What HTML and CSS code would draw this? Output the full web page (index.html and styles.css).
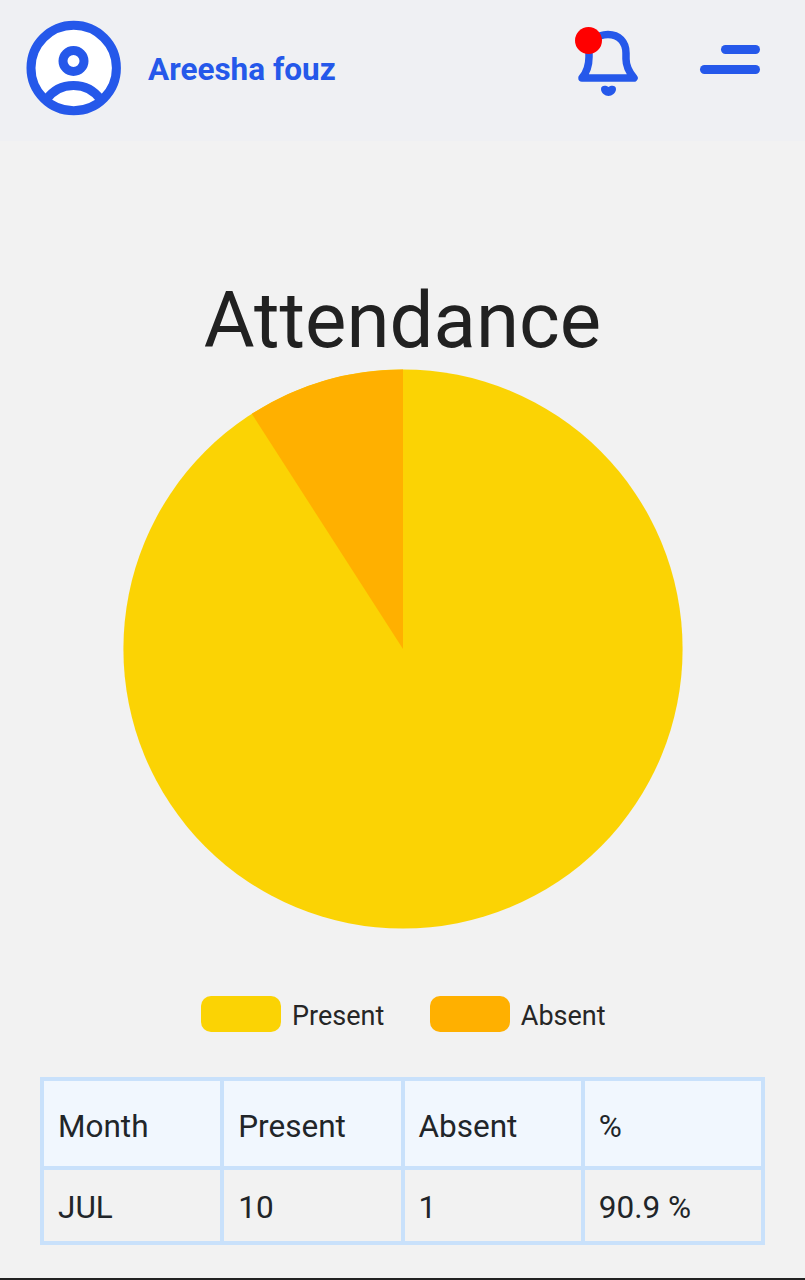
FILE: index.html
```html
<!DOCTYPE html>
<html lang="en">
<head>
    <meta charset="UTF-8">
    <meta name="viewport" content="width=device-width, initial-scale=1.0">
    <title>Attendance</title>
    <link rel="stylesheet" href="styles.css">
</head>
<body>
    <header class="topbar">
        <div class="profile">
            <svg class="avatar" width="96" height="96" viewBox="0 0 96 96">
                <circle cx="47.7" cy="48" r="42.7" fill="#fff" stroke="#2558ea" stroke-width="9"/>
                <circle cx="47.5" cy="41" r="10.5" fill="none" stroke="#2558ea" stroke-width="9"/>
                <path d="M20 80 C27 70 37 65.5 47.5 65.5 C58 65.5 68 70 75 80" fill="none" stroke="#2558ea" stroke-width="9"/>
            </svg>
            <span class="profile-name">Areesha fouz</span>
        </div>
        <div class="actions">
            <div class="bell">
                <svg width="66" height="72" viewBox="0 0 66 72">
                    <path d="M8 51 C13 45 15 38 15 30 L15 26 C15 15 23 7.5 34 7.5 C45 7.5 52 15 52 26 L52 32 C52 40 55 45 60 51 Z" fill="none" stroke="#2558ea" stroke-width="7.5" stroke-linejoin="round"/>
                    <path d="M27 62 C27 58 32 58 34.5 60 C37 58 42 58 42 62 C42 66 38 69 34.5 69 C31 69 27 66 27 62 Z" fill="#2558ea"/>
                </svg>
                <span class="bell-dot"></span>
            </div>
            <div class="menu">
                <span class="menu-line short"></span>
                <span class="menu-line"></span>
            </div>
        </div>
    </header>

    <main>
        <h1>Attendance</h1>
        <svg class="pie" width="560" height="560" viewBox="0 0 560 560">
            <circle cx="280" cy="280" r="279.6" fill="#fbd304"/>
            <path d="M280 280 L280 0.4 A279.6 279.6 0 0 0 128.8 44.8 Z" fill="#ffb000"/>
        </svg>
        <div class="legend">
            <div class="legend-item"><span class="swatch present"></span><span class="legend-label">Present</span></div>
            <div class="legend-item"><span class="swatch absent"></span><span class="legend-label">Absent</span></div>
        </div>
        <table>
            <thead>
                <tr><th>Month</th><th>Present</th><th>Absent</th><th>%</th></tr>
            </thead>
            <tbody>
                <tr><td>JUL</td><td>10</td><td>1</td><td>90.9 %</td></tr>
            </tbody>
        </table>
    </main>
</body>
</html>
```

FILE: styles.css
```css
body {
    margin: 0;
    height: 1280px;
    box-sizing: border-box;
    overflow: hidden;
    background-color: #f2f2f2;
    color: #212529;
    font-family: 'Roboto', sans-serif;
    border-bottom: 2px solid #222;
}

.topbar {
    height: 141px;
    box-sizing: border-box;
    padding: 20px 45px 25px 26px;
    background-color: #eff0f3;
    display: flex;
    align-items: flex-start;
    justify-content: space-between;
}

.profile {
    display: flex;
    align-items: center;
    gap: 26px;
}

.avatar {
    display: block;
}

.profile-name {
    padding-top: 2px;
    color: #2558ea;
    font-size: 31.5px;
    font-weight: 700;
}

.actions {
    margin-top: 7px;
    display: flex;
    align-items: flex-start;
    gap: 60px;
}

.bell {
    position: relative;
    width: 66px;
    height: 72px;
}

.bell svg {
    display: block;
}

.bell-dot {
    position: absolute;
    left: 1px;
    top: 0;
    width: 27px;
    height: 27px;
    border-radius: 50%;
    background-color: #ff0000;
}

.menu {
    margin-top: 18px;
    width: 60px;
    display: flex;
    flex-direction: column;
    align-items: flex-end;
    gap: 11px;
}

.menu-line {
    width: 60px;
    height: 9px;
    border-radius: 5px;
    background-color: #2558ea;
}

.menu-line.short {
    width: 39px;
}

main {
    display: flex;
    flex-direction: column;
    align-items: center;
}

h1 {
    margin: 132px 0 0;
    height: 96px;
    line-height: 96px;
    font-size: 78px;
    font-weight: 400;
    color: #212121;
}

.pie {
    display: block;
}

.legend {
    margin-top: 67px;
    margin-left: 1.6px;
    display: flex;
    gap: 45.6px;
}

.legend-item {
    display: flex;
    align-items: center;
    gap: 11px;
    font-size: 27px;
    color: #262626;
}

.legend-label {
    padding-top: 4px;
}

.swatch {
    width: 80px;
    height: 36px;
    border-radius: 10px;
}

.swatch.present {
    background-color: #fbd304;
}

.swatch.absent {
    background-color: #ffb000;
}

table {
    margin-top: 45px;
    width: 725px;
    table-layout: fixed;
    border-collapse: collapse;
    border: 4px solid #c9e1fb;
    font-size: 31.5px;
}

th, td {
    border: 4px solid #c9e1fb;
    padding: 4px 14px 0;
    text-align: left;
    font-weight: 400;
}

th {
    height: 79px;
    padding-top: 6px;
    background-color: #f1f7fe;
}

td {
    height: 67px;
}
```
